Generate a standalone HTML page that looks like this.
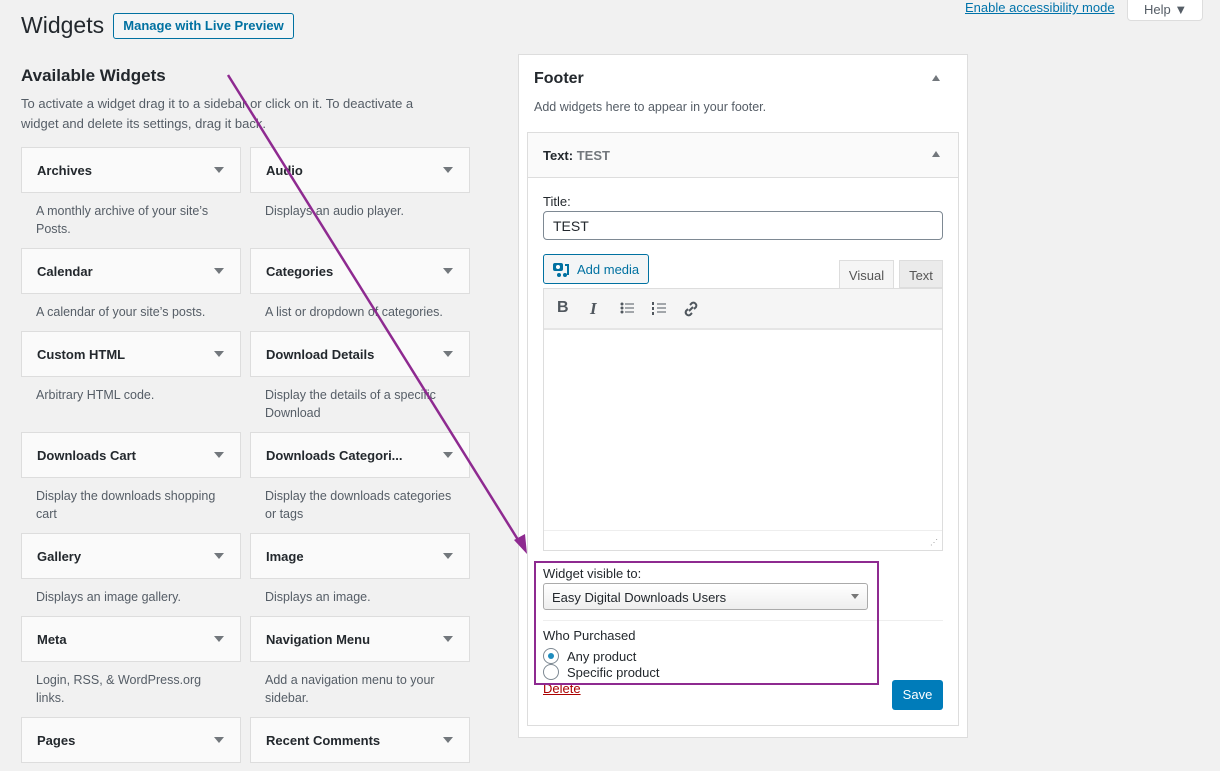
<!DOCTYPE html>
<html><head><meta charset="utf-8"><style>
*{box-sizing:border-box}
body{margin:0;width:1220px;height:771px;background:#f1f1f1;font-family:"Liberation Sans",sans-serif;color:#23282d;position:relative;overflow:hidden;font-size:13px}
.a{position:absolute}
.w{position:absolute;width:220px;height:46px;background:#fafafa;border:1px solid #ddd;font-weight:bold;font-size:13px;padding:15px 15px}
.w:after{content:"";position:absolute;right:16px;top:19px;border-left:5px solid transparent;border-right:5px solid transparent;border-top:6px solid #72777c}
.d{position:absolute;width:190px;color:#555d66;font-size:12.5px;line-height:18px}
</style></head><body>
<div class="a" style="left:21px;top:12px;font-size:23px;color:#23282d">Widgets</div>
<div class="a" style="left:113px;top:13px;width:181px;height:26px;border:1px solid #0071a1;border-radius:3px;background:#f3f5f6;color:#0071a1;font-size:13px;font-weight:bold;text-align:center;line-height:24px">Manage with Live Preview</div>
<div class="a" style="left:965px;top:0px;color:#0073aa;text-decoration:underline;font-size:13px">Enable accessibility mode</div>
<div class="a" style="left:1127px;top:-5px;width:76px;height:26px;background:#fff;border:1px solid #ddd;border-radius:0 0 4px 4px;color:#555d66;font-size:13px;padding:6px 0 0 16px">Help ▼</div>
<div class="a" style="left:21px;top:66px;font-size:17px;font-weight:bold">Available Widgets</div>
<div class="a" style="left:21px;top:94px;width:425px;font-size:13px;line-height:20px;color:#555d66">To activate a widget drag it to a sidebar or click on it. To deactivate a widget and delete its settings, drag it back.</div>

<div class="w" style="left:21px;top:147px">Archives</div><div class="w" style="left:250px;top:147px">Audio</div>
<div class="d" style="left:36px;top:202px">A monthly archive of your site’s Posts.</div><div class="d" style="left:265px;top:202px">Displays an audio player.</div>
<div class="w" style="left:21px;top:248px">Calendar</div><div class="w" style="left:250px;top:248px">Categories</div>
<div class="d" style="left:36px;top:303px">A calendar of your site’s posts.</div><div class="d" style="left:265px;top:303px;width:200px">A list or dropdown of categories.</div>
<div class="w" style="left:21px;top:331px">Custom HTML</div><div class="w" style="left:250px;top:331px">Download Details</div>
<div class="d" style="left:36px;top:386px">Arbitrary HTML code.</div><div class="d" style="left:265px;top:386px">Display the details of a specific Download</div>
<div class="w" style="left:21px;top:432px">Downloads Cart</div><div class="w" style="left:250px;top:432px">Downloads Categori...</div>
<div class="d" style="left:36px;top:487px">Display the downloads shopping cart</div><div class="d" style="left:265px;top:487px">Display the downloads categories or tags</div>
<div class="w" style="left:21px;top:533px">Gallery</div><div class="w" style="left:250px;top:533px">Image</div>
<div class="d" style="left:36px;top:588px">Displays an image gallery.</div><div class="d" style="left:265px;top:588px">Displays an image.</div>
<div class="w" style="left:21px;top:616px">Meta</div><div class="w" style="left:250px;top:616px">Navigation Menu</div>
<div class="d" style="left:36px;top:671px;width:175px">Login, RSS, &amp; WordPress.org links.</div><div class="d" style="left:265px;top:671px">Add a navigation menu to your sidebar.</div>
<div class="w" style="left:21px;top:717px">Pages</div><div class="w" style="left:250px;top:717px">Recent Comments</div>

<div class="a" style="left:518px;top:54px;width:450px;height:684px;background:#fff;border:1px solid #ddd"></div>
<div class="a" style="left:534px;top:70px;font-size:16px;font-weight:bold">Footer</div>
<div class="a" style="left:932px;top:75px;border-left:4px solid transparent;border-right:4px solid transparent;border-bottom:6px solid #72777c"></div>
<div class="a" style="left:534px;top:100px;color:#555d66;font-size:12.5px">Add widgets here to appear in your footer.</div>
<div class="a" style="left:527px;top:132px;width:432px;height:594px;border:1px solid #ddd;background:#fff"></div>
<div class="a" style="left:528px;top:133px;width:430px;height:45px;background:#fafafa;border-bottom:1px solid #ddd;padding:15px 15px;font-weight:bold;font-size:13px">Text: <span style="color:#72777c">TEST</span></div>
<div class="a" style="left:932px;top:151px;border-left:4px solid transparent;border-right:4px solid transparent;border-bottom:6px solid #72777c"></div>
<div class="a" style="left:543px;top:194px;font-size:13px">Title:</div>
<div class="a" style="left:543px;top:211px;width:400px;height:29px;border:1px solid #7e8993;border-radius:4px;padding:6px 9px;font-size:14px">TEST</div>
<div class="a" style="left:543px;top:254px;width:106px;height:30px;border:1px solid #0071a1;border-radius:3px;background:#f3f5f6;color:#0071a1;font-size:13px;padding:7px 0 0 33px">Add media</div>
<svg class="a" style="left:552px;top:261px" width="18" height="18" viewBox="0 0 18 18"><rect x="1" y="2" width="10" height="8" rx="2" fill="#0071a1"/><circle cx="6" cy="6" r="2" fill="#fff"/><path d="M13 4h3v10" stroke="#0071a1" stroke-width="2" fill="none"/><circle cx="13" cy="14" r="2" fill="#0071a1"/><circle cx="7" cy="14" r="2" fill="#0071a1"/></svg>
<div class="a" style="left:839px;top:260px;width:55px;height:29px;background:#f5f5f5;border:1px solid #ddd;border-bottom:none;color:#555;font-size:13px;text-align:center;padding-top:7px">Visual</div>
<div class="a" style="left:899px;top:260px;width:44px;height:28px;background:#ebebeb;border:1px solid #ddd;color:#555;font-size:13px;text-align:center;padding-top:7px">Text</div>
<div class="a" style="left:543px;top:288px;width:400px;height:263px;border:1px solid #ddd;background:#fff"></div>
<div class="a" style="left:544px;top:289px;width:398px;height:41px;background:#f5f5f5;border-bottom:2px solid #e5e5e5"></div>
<div class="a" style="left:557px;top:299px;font-weight:bold;font-size:16px;color:#50575e">B</div>
<div class="a" style="left:590px;top:299px;font-style:italic;font-size:17px;color:#50575e;font-family:'Liberation Serif',serif;font-weight:bold">I</div>
<svg class="a" style="left:619px;top:300px" width="16" height="16"><g fill="#50575e"><circle cx="3" cy="4" r="1.5"/><circle cx="3" cy="8" r="1.5"/><circle cx="3" cy="12" r="1.5"/><rect x="6" y="3.5" width="9" height="1"/><rect x="6" y="7.5" width="9" height="1"/><rect x="6" y="11.5" width="9" height="1"/></g></svg>
<svg class="a" style="left:651px;top:300px" width="16" height="16"><g fill="#50575e"><rect x="1" y="2" width="2" height="3"/><rect x="1" y="7" width="2" height="3"/><rect x="1" y="12" width="2" height="3"/><rect x="6" y="3.5" width="9" height="1"/><rect x="6" y="7.5" width="9" height="1"/><rect x="6" y="11.5" width="9" height="1"/></g></svg>
<svg class="a" style="left:682px;top:300px" width="18" height="18" viewBox="0 0 18 18"><g fill="none" stroke="#50575e" stroke-width="2"><path d="M8 5l2-2a3 3 0 014 4l-2 2"/><path d="M10 13l-2 2a3 3 0 01-4-4l2-2"/><path d="M7 11l4-4"/></g></svg>
<div class="a" style="left:544px;top:530px;width:398px;height:1px;background:#eee"></div>
<div class="a" style="left:930px;top:538px;font-size:8px;color:#999">⋰</div>
<div class="a" style="left:543px;top:566px;font-size:13px">Widget visible to:</div>
<div class="a" style="left:543px;top:583px;width:325px;height:27px;border:1px solid #aaa;border-radius:3px;background:linear-gradient(#fff,#eee);padding:6px 8px;font-size:13px">Easy Digital Downloads Users</div>
<div class="a" style="left:851px;top:594px;border-left:4px solid transparent;border-right:4px solid transparent;border-top:5px solid #777"></div>
<div class="a" style="left:543px;top:620px;width:400px;height:1px;background:#eee"></div>
<div class="a" style="left:543px;top:628px;font-size:13px">Who Purchased</div>
<div class="a" style="left:543px;top:648px;width:16px;height:16px;border-radius:50%;border:1px solid #7e8993;background:#fff"></div>
<div class="a" style="left:548px;top:653px;width:6px;height:6px;border-radius:50%;background:#1e8cbe"></div>
<div class="a" style="left:567px;top:649px;font-size:13px">Any product</div>
<div class="a" style="left:543px;top:664px;width:16px;height:16px;border-radius:50%;border:1px solid #7e8993;background:#fff"></div>
<div class="a" style="left:567px;top:665px;font-size:13px">Specific product</div>
<div class="a" style="left:543px;top:681px;color:#a00;text-decoration:underline;font-size:13px">Delete</div>
<div class="a" style="left:892px;top:680px;width:51px;height:30px;background:#007cba;border-radius:3px;color:#fff;font-size:13px;text-align:center;line-height:30px">Save</div>
<div class="a" style="left:534px;top:561px;width:345px;height:124px;border:2px solid #8e2a90"></div>
<svg class="a" style="left:0;top:0" width="1220" height="771"><line x1="228" y1="75" x2="520" y2="543" stroke="#8e2a90" stroke-width="2.5"/><polygon points="527,554 514,540 525,534" fill="#8e2a90"/></svg>
</body></html>
